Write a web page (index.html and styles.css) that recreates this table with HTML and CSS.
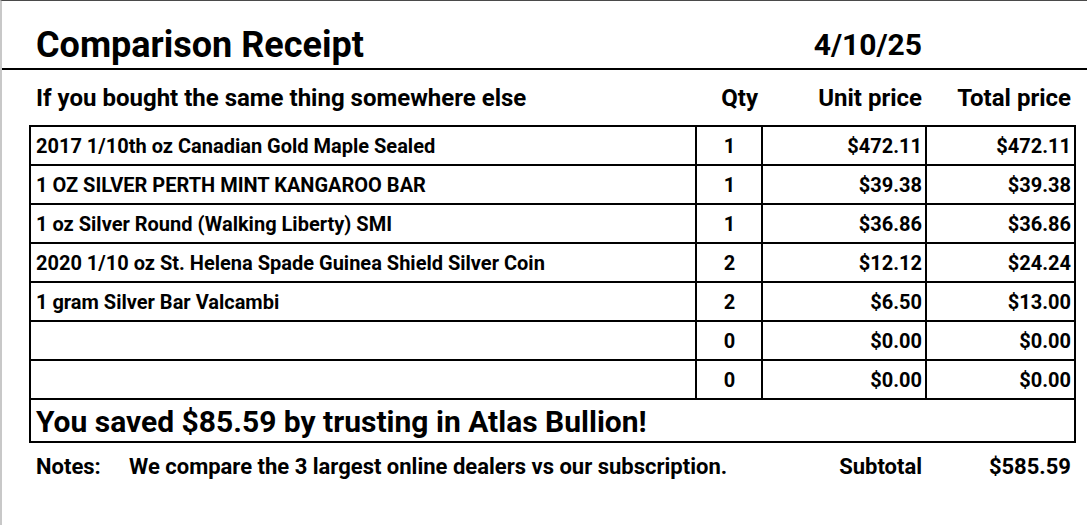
FILE: index.html
```html
<!DOCTYPE html>
<html lang="en">
<head>
<meta charset="utf-8">
<title>Comparison Receipt</title>
<link rel="stylesheet" href="styles.css">
</head>
<body>
<div class="page">
  <div class="title-bar">
    <div class="grid">
      <div class="title">Comparison Receipt</div>
      <div class="date">4/10/25</div>
    </div>
  </div>
  <div class="grid head-row">
    <div class="c-desc">If you bought the same thing somewhere else</div>
    <div class="c-qty-h">Qty</div>
    <div class="c-num">Unit price</div>
    <div class="c-num">Total price</div>
  </div>
  <div class="table">
    <div class="cell c-desc">2017 1/10th oz Canadian Gold Maple Sealed</div>
    <div class="cell c-qty">1</div>
    <div class="cell c-num">$472.11</div>
    <div class="cell c-num">$472.11</div>

    <div class="cell c-desc">1 OZ SILVER PERTH MINT KANGAROO BAR</div>
    <div class="cell c-qty">1</div>
    <div class="cell c-num">$39.38</div>
    <div class="cell c-num">$39.38</div>

    <div class="cell c-desc">1 oz Silver Round (Walking Liberty) SMI</div>
    <div class="cell c-qty">1</div>
    <div class="cell c-num">$36.86</div>
    <div class="cell c-num">$36.86</div>

    <div class="cell c-desc">2020 1/10 oz St. Helena Spade Guinea Shield Silver Coin</div>
    <div class="cell c-qty">2</div>
    <div class="cell c-num">$12.12</div>
    <div class="cell c-num">$24.24</div>

    <div class="cell c-desc">1 gram Silver Bar Valcambi</div>
    <div class="cell c-qty">2</div>
    <div class="cell c-num">$6.50</div>
    <div class="cell c-num">$13.00</div>

    <div class="cell c-desc"></div>
    <div class="cell c-qty">0</div>
    <div class="cell c-num">$0.00</div>
    <div class="cell c-num">$0.00</div>

    <div class="cell c-desc"></div>
    <div class="cell c-qty">0</div>
    <div class="cell c-num">$0.00</div>
    <div class="cell c-num">$0.00</div>

    <div class="cell saved">You saved $85.59 by trusting in Atlas Bullion!</div>
  </div>
  <div class="grid notes-row">
    <div class="notes">
      <span class="notes-label">Notes:</span>
      <span class="notes-text">We compare the 3 largest online dealers vs our subscription.</span>
    </div>
    <div class="c-num">Subtotal</div>
    <div class="c-num">$585.59</div>
  </div>
</div>
</body>
</html>
```

FILE: styles.css
```css
html, body {
  margin: 0;
  padding: 0;
  background: #fff;
}

body {
  font-family: Roboto, "Liberation Sans", Arial, sans-serif;
  font-weight: 700;
  color: #000;
}

.page {
  height: 525px;
  box-sizing: border-box;
  border-left: 2px solid #c8c8c8;
  border-top: 1px solid #4a4a4a;
}

.grid {
  display: grid;
  grid-template-columns: 664px 64px 162px 147px;
  column-gap: 2px;
  padding: 0 2px;
  margin-left: 27px;
  width: 1047px;
  box-sizing: border-box;
}

.title-bar {
  border-bottom: 2px solid #000;
  padding: 24px 0 3px;
}

.title {
  font-size: 36px;
  line-height: 40px;
  padding-left: 5px;
  white-space: nowrap;
}

.date {
  grid-column: 3;
  font-size: 30px;
  line-height: 40px;
  text-align: right;
  padding-right: 3px;
}

.head-row {
  padding-top: 14px;
  padding-bottom: 13px;
  font-size: 24px;
  line-height: 28px;
}

.c-desc {
  padding-left: 5px;
  white-space: nowrap;
}

.c-qty-h {
  text-align: right;
  padding-right: 3px;
}

.c-qty {
  text-align: center;
  padding-left: 1px;
}

.c-num {
  text-align: right;
  padding-right: 3px;
  white-space: nowrap;
}

.table {
  display: grid;
  grid-template-columns: 664px 64px 162px 147px;
  gap: 2px;
  padding: 2px;
  margin-left: 27px;
  width: 1047px;
  box-sizing: border-box;
  background: #000;
}

.cell {
  background: #fff;
  height: 37px;
  font-size: 20px;
  line-height: 39px;
  white-space: nowrap;
}

.saved {
  grid-column: 1 / -1;
  height: 41px;
  font-size: 30px;
  line-height: 43px;
  padding-left: 5px;
}

.notes-row {
  padding-top: 11px;
  font-size: 22px;
  line-height: 26px;
}

.notes {
  grid-column: 1 / 3;
  display: flex;
  padding-left: 5px;
  white-space: nowrap;
}

.notes-label {
  width: 93px;
}
```
